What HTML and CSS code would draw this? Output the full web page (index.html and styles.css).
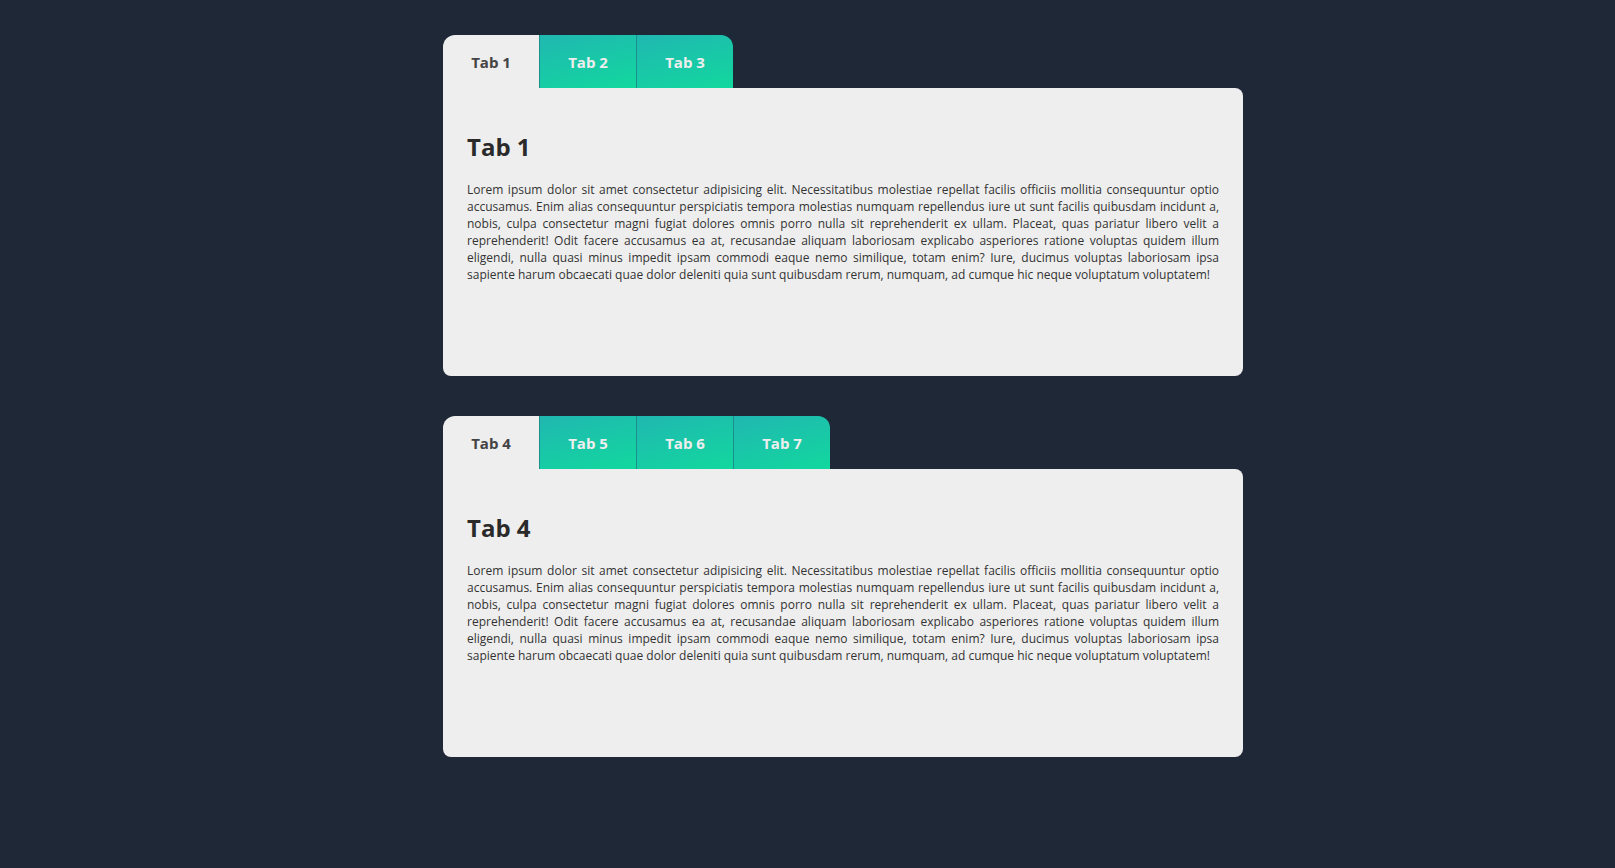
FILE: index.html
```html
<!DOCTYPE html>
<html lang="en">
<head>
<meta charset="utf-8">
<title>Tabs</title>
<link rel="stylesheet" href="styles.css">
</head>
<body>
<main class="page">
  <section class="tabs">
    <div class="tab-bar">
      <button class="tab active">Tab 1</button>
      <button class="tab">Tab 2</button>
      <button class="tab last">Tab 3</button>
    </div>
    <div class="panel">
      <h2 class="panel-title">Tab 1</h2>
      <p class="panel-text">Lorem ipsum dolor sit amet consectetur adipisicing elit. Necessitatibus molestiae repellat facilis officiis mollitia consequuntur optio accusamus. Enim alias consequuntur perspiciatis tempora molestias numquam repellendus iure ut sunt facilis quibusdam incidunt a, nobis, culpa consectetur magni fugiat dolores omnis porro nulla sit reprehenderit ex ullam. Placeat, quas pariatur libero velit a reprehenderit! Odit facere accusamus ea at, recusandae aliquam laboriosam explicabo asperiores ratione voluptas quidem illum eligendi, nulla quasi minus impedit ipsam commodi eaque nemo similique, totam enim? Iure, ducimus voluptas laboriosam ipsa sapiente harum obcaecati quae dolor deleniti quia sunt quibusdam rerum, numquam, ad cumque hic neque voluptatum voluptatem!</p>
    </div>
  </section>
  <section class="tabs">
    <div class="tab-bar">
      <button class="tab active">Tab 4</button>
      <button class="tab">Tab 5</button>
      <button class="tab">Tab 6</button>
      <button class="tab last">Tab 7</button>
    </div>
    <div class="panel">
      <h2 class="panel-title">Tab 4</h2>
      <p class="panel-text">Lorem ipsum dolor sit amet consectetur adipisicing elit. Necessitatibus molestiae repellat facilis officiis mollitia consequuntur optio accusamus. Enim alias consequuntur perspiciatis tempora molestias numquam repellendus iure ut sunt facilis quibusdam incidunt a, nobis, culpa consectetur magni fugiat dolores omnis porro nulla sit reprehenderit ex ullam. Placeat, quas pariatur libero velit a reprehenderit! Odit facere accusamus ea at, recusandae aliquam laboriosam explicabo asperiores ratione voluptas quidem illum eligendi, nulla quasi minus impedit ipsam commodi eaque nemo similique, totam enim? Iure, ducimus voluptas laboriosam ipsa sapiente harum obcaecati quae dolor deleniti quia sunt quibusdam rerum, numquam, ad cumque hic neque voluptatum voluptatem!</p>
    </div>
  </section>
</main>
</body>
</html>
```

FILE: styles.css
```css
* { box-sizing: border-box; }
html, body {
  margin: 0;
  padding: 0;
  background: #1f2836;
  font-family: "Open Sans", "Noto Sans", sans-serif;
}
.page {
  width: 800px;
  margin: 0 auto 0 443px;
  padding-top: 35px;
  display: flex;
  flex-direction: column;
  gap: 40px;
}
.tabs {
  display: flex;
  flex-direction: column;
}
.tab-bar {
  display: flex;
}
.tab {
  width: 97px;
  height: 53px;
  border: 0;
  border-left: 1px solid #1a8f8c;
  margin: 0;
  padding: 0;
  font-family: inherit;
  font-size: 15px;
  font-weight: 700;
  color: #eeeeee;
  background: linear-gradient(165deg, #20b7b1 0%, #12d89e 100%);
  cursor: pointer;
}
.tab.active {
  width: 96px;
  border-left: 0;
  background: #eeeeee;
  color: #444444;
  border-top-left-radius: 12px;
}
.tab.last {
  border-top-right-radius: 12px;
}
.panel {
  background: #eeeeee;
  height: 288px;
  padding: 24px 24px;
  border-radius: 0 8px 8px 8px;
}
.panel-title {
  margin: 18px 0 0;
  font-size: 24px;
  font-weight: 700;
  color: #2a2a2a;
  line-height: 34px;
}
.panel-text {
  margin: 17px 0 0;
  font-size: 12px;
  line-height: 17px;
  color: #333333;
  text-align: justify;
}
```
